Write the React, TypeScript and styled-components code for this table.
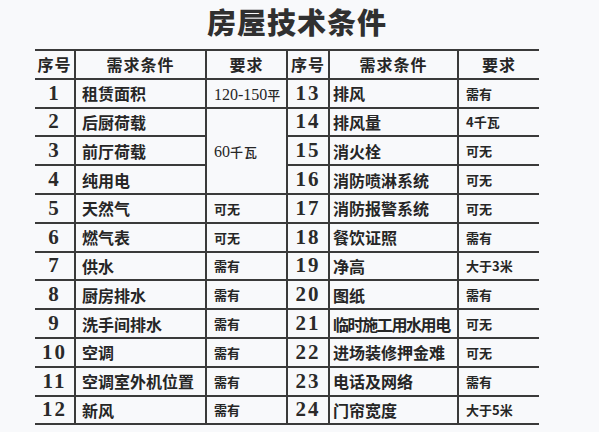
import styled, { createGlobalStyle } from 'styled-components';

const GlobalStyle = createGlobalStyle`
  html, body {
    margin: 0;
    padding: 0;
    background: #f8f9fb;
  }
`;

interface Item {
  no: number;
  name: string;
  value?: string;
  span?: number;
  tight?: boolean;
}

const LEFT: Item[] = [
  { no: 1, name: '租赁面积', value: '120-150平' },
  { no: 2, name: '后厨荷载', value: '60千瓦', span: 3 },
  { no: 3, name: '前厅荷载' },
  { no: 4, name: '纯用电' },
  { no: 5, name: '天然气', value: '可无' },
  { no: 6, name: '燃气表', value: '可无' },
  { no: 7, name: '供水', value: '需有' },
  { no: 8, name: '厨房排水', value: '需有' },
  { no: 9, name: '洗手间排水', value: '需有' },
  { no: 10, name: '空调', value: '需有' },
  { no: 11, name: '空调室外机位置', value: '需有' },
  { no: 12, name: '新风', value: '需有' },
];

const RIGHT: Item[] = [
  { no: 13, name: '排风', value: '需有' },
  { no: 14, name: '排风量', value: '4千瓦' },
  { no: 15, name: '消火栓', value: '可无' },
  { no: 16, name: '消防喷淋系统', value: '可无' },
  { no: 17, name: '消防报警系统', value: '可无' },
  { no: 18, name: '餐饮证照', value: '需有' },
  { no: 19, name: '净高', value: '大于3米' },
  { no: 20, name: '图纸', value: '需有' },
  { no: 21, name: '临时施工用水用电', value: '可无', tight: true },
  { no: 22, name: '进场装修押金难', value: '可无' },
  { no: 23, name: '电话及网络', value: '需有' },
  { no: 24, name: '门帘宽度', value: '大于5米' },
];

const COLS = [40, 131, 81, 42, 129, 81];

const Page = styled.div`
  width: 504px;
  padding-left: 35px;
  color: #262626;
  font-family: 'Noto Sans CJK SC', sans-serif;
`;

const Title = styled.h1`
  margin: 0;
  height: 49px;
  padding-left: 20px;
  box-sizing: border-box;
  text-align: center;
  font-size: 29px;
  line-height: 43px;
  font-weight: 900;
  letter-spacing: 1px;
  color: #303030;
`;

const Grid = styled.table`
  width: 504px;
  border-collapse: collapse;
  table-layout: fixed;
`;

const Col = styled.col<{ $w: number }>`
  width: ${(p) => p.$w}px;
`;

const Row = styled.tr`
  height: 28.8px;
`;

const Cell = styled.td<{ $first?: boolean }>`
  padding: 0;
  border-top: 2px solid #3a3a3a;
  border-bottom: 2px solid #3a3a3a;
  border-left: ${(p) => (p.$first ? 'none' : '2px solid #3a3a3a')};
  vertical-align: middle;
  white-space: nowrap;
  overflow: hidden;
`;

const HeadCell = styled(Cell)`
  text-align: center;
  font-size: 16px;
  font-weight: 700;
  letter-spacing: 1px;
`;

const NoCell = styled(Cell)`
  text-align: center;
  font-family: 'Liberation Serif', 'DejaVu Serif', serif;
  font-size: 21px;
  font-weight: 700;
  letter-spacing: 2px;
  color: #2a2a2a;
`;

const NameCell = styled(Cell)<{ $pad: number; $tight?: boolean }>`
  padding-left: ${(p) => p.$pad}px;
  font-size: 16px;
  font-weight: 700;
  letter-spacing: ${(p) => (p.$tight ? '-1.4px' : '0')};
`;

const ValueCell = styled(Cell)<{ $wide?: boolean }>`
  padding-left: 7px;
  font-size: ${(p) => (p.$wide ? '15px' : '13px')};
  font-weight: 700;
  letter-spacing: ${(p) => (p.$wide ? '1px' : '0')};
`;

const Digits = styled.span`
  font-family: 'Liberation Serif', 'Noto Sans CJK SC', serif;
  font-weight: 400;
  font-size: 16px;
  letter-spacing: 0;
`;

const Unit = styled.span`
  font-size: 13px;
  font-weight: 500;
`;

function renderValue(value: string) {
  const m = value.match(/^([\d-]+)(.*)$/);
  if (!m) return value;
  return (
    <>
      <Digits>{m[1]}</Digits>
      <Unit>{m[2]}</Unit>
    </>
  );
}

export default function App() {
  return (
    <Page>
      <GlobalStyle />
      <Title>房屋技术条件</Title>
      <Grid>
        <colgroup>
          {COLS.map((w, i) => (
            <Col key={i} $w={w} />
          ))}
        </colgroup>
        <tbody>
          <Row>
            <HeadCell $first>序号</HeadCell>
            <HeadCell>需求条件</HeadCell>
            <HeadCell>要求</HeadCell>
            <HeadCell>序号</HeadCell>
            <HeadCell>需求条件</HeadCell>
            <HeadCell>要求</HeadCell>
          </Row>
          {LEFT.map((l, i) => {
            const r = RIGHT[i];
            const spanned = i >= 2 && i <= 3;
            return (
              <Row key={l.no}>
                <NoCell $first>{l.no}</NoCell>
                <NameCell $pad={6}>{l.name}</NameCell>
                {!spanned && (
                  <ValueCell rowSpan={l.span} $wide={i < 2}>
                    {i < 2 ? renderValue(l.value ?? '') : l.value}
                  </ValueCell>
                )}
                <NoCell>{r.no}</NoCell>
                <NameCell $pad={3} $tight={r.tight}>
                  {r.name}
                </NameCell>
                <ValueCell>{r.value}</ValueCell>
              </Row>
            );
          })}
        </tbody>
      </Grid>
    </Page>
  );
}
